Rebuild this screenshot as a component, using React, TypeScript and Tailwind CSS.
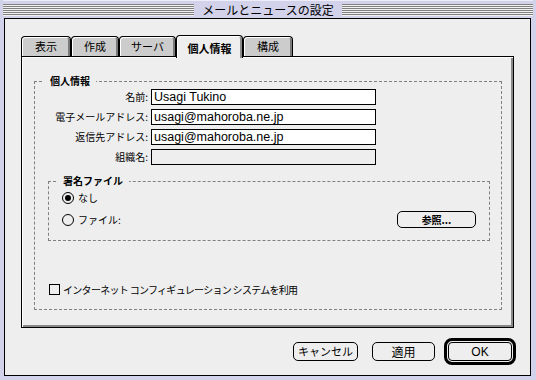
import React from "react";

const cjk = { fontFamily: '"Noto Sans CJK JP", "Noto Sans", sans-serif' };
const latin = { fontFamily: '"Liberation Sans", Arial, "Noto Sans CJK JP", sans-serif' };

function Tab({ label, className, active }: { label: string; className: string; active?: boolean }) {
  if (active) {
    return (
      <div
        className={`relative z-10 -mb-[2px] h-[23px] border border-b-0 border-black rounded-t-[4px] bg-[#eeeeee] shadow-[inset_1px_1px_0_#ffffff,inset_-2px_0_0_#8a8a8a] flex items-start justify-center pt-[4px] text-[11px] font-bold text-black ${className}`}
      >
        {label}
      </div>
    );
  }
  return (
    <div
      className={`h-[20px] border border-b-0 border-black rounded-t-[4px] bg-[#cccccc] shadow-[inset_1px_1px_0_#ffffff,inset_-2px_0_0_#7a7a7a] flex items-center justify-center text-[11px] text-black ${className}`}
    >
      {label}
    </div>
  );
}

function Field({ label, value, disabled }: { label: string; value: string; disabled?: boolean }) {
  return (
    <div className="flex items-center">
      <div className="w-[114px] text-right text-[10px] leading-none text-black pr-[1px]">{label}</div>
      <div
        className={`ml-[2px] w-[225px] h-[16px] border border-black flex items-center pl-[2px] text-[12.5px] leading-none text-black ${
          disabled ? "bg-[#eeeeee]" : "bg-white"
        }`}
        style={latin}
      >
        {value}
      </div>
    </div>
  );
}

function Radio({ checked }: { checked?: boolean }) {
  return (
    <span className="w-[12px] h-[12px] rounded-full border border-black bg-[#eeeeee] flex items-center justify-center shrink-0">
      {checked ? <span className="w-[6px] h-[6px] rounded-full bg-black" /> : null}
    </span>
  );
}

export default function App() {
  return (
    <div className="w-[536px] h-[380px] bg-[#d2d2ea] flex flex-col pl-[4px] pr-[5px] pb-[4px] overflow-hidden" style={cjk}>
      {/* Title bar */}
      <div className="h-[18px] -ml-[1px] -mr-[2px] flex items-center shrink-0 border-t border-[#ececfa]">
        <div className="flex-1 h-[12px] bg-[repeating-linear-gradient(to_bottom,#808080_0px,#808080_1px,#f2f2f2_1px,#f2f2f2_2px)]" />
        <div className="px-[8px] text-[12px] leading-none text-black">メールとニュースの設定</div>
        <div className="flex-1 h-[12px] bg-[repeating-linear-gradient(to_bottom,#808080_0px,#808080_1px,#f2f2f2_1px,#f2f2f2_2px)]" />
      </div>

      {/* Content */}
      <div className="flex-1 border border-black bg-[#eeeeee] flex flex-col pl-[16px] pt-[16px]">
        {/* Tabs */}
        <div className="flex items-end h-[21px]">
          <Tab label="表示" className="w-[50px]" />
          <Tab label="作成" className="w-[48px]" />
          <Tab label="サーバ" className="w-[57px]" />
          <Tab label="個人情報" className="w-[67px]" active />
          <Tab label="構成" className="w-[50px]" />
        </div>

        {/* Panel */}
        <div className="w-[493px] h-[272px] border border-black bg-[#eeeeee] shadow-[inset_1px_1px_0_#ffffff,inset_-2px_-2px_0_#888888] pl-[12px] pt-[24px]">
          <div className="relative w-[468px] h-[229px] border border-dashed border-[#808080] pt-[7px]">
            <div className="absolute -top-[7px] left-[9px] bg-[#eeeeee] px-[6px] text-[10px] font-bold leading-[12px] text-black">
              個人情報
            </div>
            <div className="flex flex-col gap-[4px]">
              <Field label="名前:" value="Usagi Tukino" />
              <Field label="電子メールアドレス:" value="usagi@mahoroba.ne.jp" />
              <Field label="返信先アドレス:" value="usagi@mahoroba.ne.jp" />
              <Field label="組織名:" value="" disabled />
            </div>

            {/* Signature group */}
            <div className="relative ml-[13px] mt-[16px] w-[442px] h-[60px] border border-dashed border-[#808080] pl-[13px] pr-[13px] pt-[10px]">
              <div className="absolute -top-[7px] left-[8px] bg-[#eeeeee] px-[6px] text-[10px] font-bold leading-[12px] text-black">
                署名ファイル
              </div>
              <div className="flex items-center h-[12px] gap-[4px]">
                <Radio checked />
                <span className="text-[10px] leading-none text-black">なし</span>
              </div>
              <div className="flex items-center h-[17px] mt-[7px] gap-[4px]">
                <Radio />
                <span className="text-[10px] leading-none text-black">ファイル:</span>
                <div className="flex-1" />
                <div className="w-[79px] h-[17px] border border-black rounded-[5px] bg-[#eeeeee] flex items-center justify-center text-[10px] font-bold text-black">
                  参照...
                </div>
              </div>
            </div>

            {/* Checkbox */}
            <div className="flex items-center ml-[14px] mt-[43px] gap-[3px]">
              <span className="w-[11px] h-[11px] border border-black bg-[#eeeeee] shrink-0" />
              <span className="text-[10px] leading-none text-black tracking-[-0.7px]">
                インターネット コンフィギュレーション システムを利用
              </span>
            </div>
          </div>
        </div>

        {/* Buttons */}
        <div className="flex items-center justify-end pr-[14px] mt-[10px]">
          <div className="w-[65px] h-[19px] border border-black rounded-[5px] bg-[#eeeeee] flex items-center justify-center text-[11px] text-black">
            キャンセル
          </div>
          <div className="ml-[14px] w-[63px] h-[19px] border border-black rounded-[5px] bg-[#eeeeee] flex items-center justify-center text-[12px] text-black">
            適用
          </div>
          <div className="ml-[9px] w-[72px] h-[27px] border-[3px] border-black rounded-[8px] p-[1px]">
            <div className="w-full h-full border border-black rounded-[4px] bg-[#eeeeee] flex items-center justify-center text-[12px] text-black" style={latin}>
              OK
            </div>
          </div>
        </div>
      </div>
    </div>
  );
}
